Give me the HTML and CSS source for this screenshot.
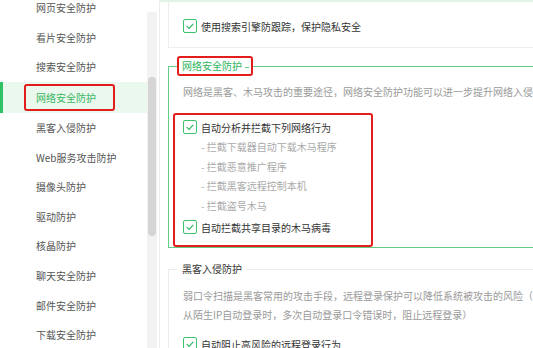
FILE: index.html
```html
<!DOCTYPE html>
<html lang="zh-CN">
<head>
    <meta charset="UTF-8">
    <title>网络安全防护</title>
    <link rel="stylesheet" href="styles.css">
</head>
<body>
    <div class="sidebar">
        <ul class="nav-list">
            <li>网页安全防护</li>
            <li>看片安全防护</li>
            <li>搜索安全防护</li>
            <li class="active"><span class="mark">网络安全防护</span></li>
            <li>黑客入侵防护</li>
            <li>Web服务攻击防护</li>
            <li>摄像头防护</li>
            <li>驱动防护</li>
            <li>核晶防护</li>
            <li>聊天安全防护</li>
            <li>邮件安全防护</li>
            <li>下载安全防护</li>
        </ul>
        <div class="scroll-track"><div class="scroll-thumb"></div></div>
    </div>

    <div class="content">
        <div class="card">
            <label class="check-row">
                <span class="checkbox"><svg viewBox="0 0 13 13"><path d="M3 6.6 L5.5 9.1 L10 4.2" /></svg></span>
                使用搜索引擎防跟踪，保护隐私安全
            </label>
        </div>

        <fieldset class="group group-active">
            <legend class="mark">网络安全防护</legend>
            <p class="desc">网络是黑客、木马攻击的重要途径，网络安全防护功能可以进一步提升网络入侵检测能力</p>
            <div class="mark-box">
                <label class="check-row">
                    <span class="checkbox"><svg viewBox="0 0 13 13"><path d="M3 6.6 L5.5 9.1 L10 4.2" /></svg></span>
                    自动分析并拦截下列网络行为
                </label>
                <ul class="sub-list">
                    <li>- 拦截下载器自动下载木马程序</li>
                    <li>- 拦截恶意推广程序</li>
                    <li>- 拦截黑客远程控制本机</li>
                    <li>- 拦截盗号木马</li>
                </ul>
                <label class="check-row check-last">
                    <span class="checkbox"><svg viewBox="0 0 13 13"><path d="M3 6.6 L5.5 9.1 L10 4.2" /></svg></span>
                    自动拦截共享目录的木马病毒
                </label>
            </div>
        </fieldset>

        <fieldset class="group">
            <legend>黑客入侵防护</legend>
            <p class="desc desc-multi">弱口令扫描是黑客常用的攻击手段，远程登录保护可以降低系统被攻击的风险（<br>从陌生IP自动登录时，多次自动登录口令错误时，阻止远程登录）</p>
            <label class="check-row check-bottom">
                <span class="checkbox"><svg viewBox="0 0 13 13"><path d="M3 6.6 L5.5 9.1 L10 4.2" /></svg></span>
                自动阻止高风险的远程登录行为
            </label>
        </fieldset>
    </div>
</body>
</html>
```

FILE: styles.css
```css
* {
    margin: 0;
    padding: 0;
    box-sizing: border-box;
}

body {
    width: 533px;
    height: 348px;
    overflow: hidden;
    display: flex;
    background: #fff;
    font-family: "Noto Sans CJK SC", "Noto Sans", sans-serif;
    font-size: 10px;
    color: #333;
}

/* Sidebar */
.sidebar {
    flex: none;
    width: 160px;
    display: flex;
    border-right: 1px solid #ececec;
    padding-right: 2px;
}

.nav-list {
    flex: 1;
    list-style: none;
    margin-top: -7px;
}

.nav-list li {
    height: 29.6px;
    display: flex;
    align-items: center;
    padding-left: 36px;
    color: #555;
    font-size: 10px;
    white-space: nowrap;
}

.nav-list li.active {
    background: #eaf8ee;
    border-left: 3px solid #2fc163;
    padding-left: 21px;
    height: 31px;
    color: #3ab661;
}

.nav-list li .mark {
    display: inline-block;
    padding: 4px 17px 4px 10px;
    border: 2px solid #e31d1c;
    border-radius: 3px;
}

.scroll-track {
    flex: none;
    width: 10px;
    margin-top: 12px;
    background: #f2f2f2;
    padding: 0 1px;
}

.scroll-thumb {
    margin-top: 65px;
    height: 159px;
    background: #d5d5d5;
    border-radius: 4px;
}

/* Content */
.content {
    flex: none;
    width: 420px;
    padding-left: 8px;
    border-top: 2px solid #e1f4e8;
}

.card {
    height: 46px;
    border-left: 1px solid #eee;
    border-bottom: 1px solid #eee;
    padding: 14px 0 0 14px;
}

.check-row {
    display: flex;
    align-items: center;
    gap: 4px;
    height: 20px;
    color: #333;
    white-space: nowrap;
}

.checkbox {
    width: 14px;
    height: 14px;
    border: 1px solid #3ec26d;
    border-radius: 2px;
    background: #fff;
    display: flex;
    align-items: center;
    justify-content: center;
}

.checkbox svg {
    width: 12px;
    height: 12px;
    fill: none;
    stroke: #2fb862;
    stroke-width: 1.3;
}

.group {
    margin-top: 8px;
    border: 1px solid #ebebeb;
    border-right: none;
    padding: 0 0 0 4px;
}

.group-active {
    border-color: #62cd86;
}

.group legend {
    margin-left: 4px;
    padding: 0 5px;
    height: 20px;
    line-height: 20px;
    color: #333;
    font-size: 10px;
}

.group-active legend {
    color: #2db45c;
}

.group legend.mark {
    border: 2px solid #e31d1c;
    border-radius: 3px;
    padding: 0 2px 0 3px;
    line-height: 16px;
    background: #fff;
}

.group legend.mark::after {
    content: "";
    display: inline-block;
    width: 4px;
    height: 1px;
    margin-left: 3px;
    vertical-align: middle;
    background: #5dc883;
}

.desc {
    margin: 8px 0 0 10px;
    line-height: 16px;
    color: #9a9a9a;
    white-space: nowrap;
}

.desc-multi {
    margin-top: 7px;
    line-height: 19px;
}

.mark-box {
    width: 200px;
    margin-top: 13px;
    border: 2px solid #e31d1c;
    border-radius: 3px;
    padding: 2px 0 8px 8px;
}

.sub-list {
    list-style: none;
    padding-left: 18px;
}

.sub-list li {
    height: 19.5px;
    line-height: 19.5px;
    color: #aaa;
}

.check-last {
    margin-top: 2px;
}

.group:last-child {
    margin-top: 11px;
    height: 120px;
}

.check-bottom {
    margin: 10px 0 0 10px;
}
```
